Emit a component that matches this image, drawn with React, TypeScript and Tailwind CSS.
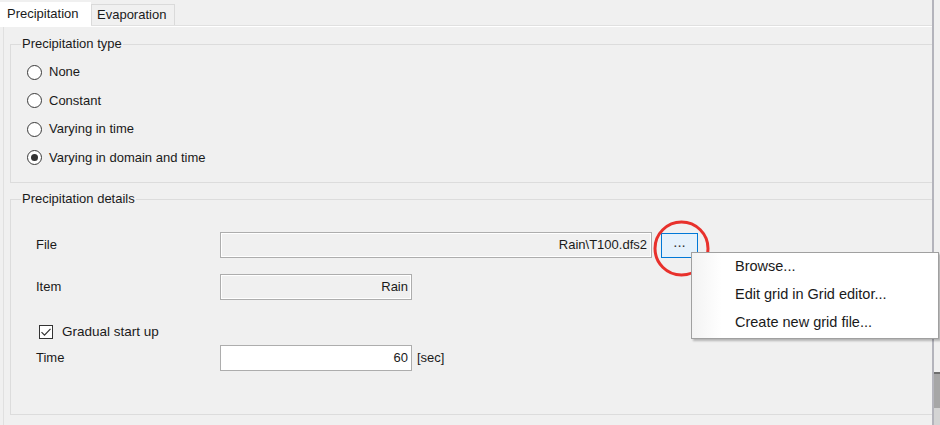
import React from "react";

const font = { fontFamily: '"Liberation Sans", Arial, sans-serif' };

function Radio({ label, checked }: { label: string; checked?: boolean }) {
  return (
    <div className="h-[28.5px] flex items-center">
      <div className="w-[15px] h-[15px] rounded-full border-[1.5px] border-[#3a3a3a] bg-white flex items-center justify-center">
        {checked && <div className="w-[7px] h-[7px] rounded-full bg-[#333333]" />}
      </div>
      <span className="ml-[7px] text-[13px] text-[#1a1a1a] leading-[16px]">{label}</span>
    </div>
  );
}

function GroupBox({
  title,
  className,
  children,
}: {
  title: string;
  className: string;
  children: React.ReactNode;
}) {
  return (
    <div className={"relative border border-[#dcdcdc] mr-[-20px] shrink-0 " + className}>
      <span className="absolute left-[10px] top-[-9px] px-[1px] bg-[#f0f0f0] text-[13px] leading-[16px] text-[#1a1a1a]">
        {title}
      </span>
      {children}
    </div>
  );
}

export default function App() {
  return (
    <div
      className="w-[940px] h-[425px] bg-[#f0f0f0] flex overflow-hidden relative text-[#1a1a1a]"
      style={font}
    >
      {/* main content */}
      <div className="w-[932px] h-full flex flex-col overflow-hidden shrink-0">
        {/* tab strip */}
        <div className="h-[25px] flex items-end shrink-0 relative z-10">
          <div className="w-[91px] h-[25px] mb-[-2px] bg-white flex items-center pl-[7px] text-[13px] pb-[2px]">
            Precipitation
          </div>
          <div className="w-[84px] h-[21px] border border-b-0 border-[#dadada] flex items-center pl-[5px] text-[13px]">
            Evaporation
          </div>
        </div>
        {/* tab panel */}
        <div className="flex-1 ml-[3px] border-l border-t border-[#e0e0e0] shadow-[inset_0_1px_0_#ffffff] flex flex-col pl-[6px] overflow-hidden">
          <GroupBox title="Precipitation type" className="mt-[18px] h-[139px]">
            <div className="pt-[13px] pl-[16px] flex flex-col">
              <Radio label="None" />
              <Radio label="Constant" />
              <Radio label="Varying in time" />
              <Radio label="Varying in domain and time" checked />
            </div>
          </GroupBox>

          <GroupBox title="Precipitation details" className="mt-[16px] h-[216px]">
            <div className="pl-[25px] flex flex-col text-[13px]">
              {/* File */}
              <div className="mt-[32px] h-[26px] flex items-center">
                <span className="w-[184px]">File</span>
                <div className="w-[432px] h-[26px] border border-[#adadad] shadow-[inset_0_0_0_1px_#ffffff] bg-[#f0f0f0] flex items-center justify-end pr-[4px]">
                  Rain\T100.dfs2
                </div>
                <div className="ml-[9px] w-[37px] h-[25px] border border-[#0078d7] bg-[#e5f1fb] flex items-center justify-center pb-[5px] text-[15px] text-[#333333]">
                  ...
                </div>
              </div>
              {/* Item */}
              <div className="mt-[16px] h-[26px] flex items-center">
                <span className="w-[184px]">Item</span>
                <div className="w-[192px] h-[26px] border border-[#adadad] shadow-[inset_0_0_0_1px_#ffffff] bg-[#f0f0f0] flex items-center justify-end pr-[3px]">
                  Rain
                </div>
              </div>
              {/* Checkbox */}
              <div className="mt-[24px] h-[16px] flex items-center ml-[3px]">
                <div className="w-[14px] h-[14px] border border-[#333333] bg-white flex items-center justify-center">
                  <svg width="12" height="12" viewBox="0 0 12 12">
                    <path d="M1.5 6.2 L4.5 9.2 L10.5 2.8" fill="none" stroke="#333333" strokeWidth="1.2" />
                  </svg>
                </div>
                <span className="ml-[9px] text-[13.5px]">Gradual start up</span>
              </div>
              {/* Time */}
              <div className="mt-[5px] h-[26px] flex items-center">
                <span className="w-[184px]">Time</span>
                <div className="w-[192px] h-[26px] border border-[#adadad] bg-white flex items-center justify-end pr-[3px]">
                  60
                </div>
                <span className="ml-[5px]">[sec]</span>
              </div>
            </div>
          </GroupBox>
        </div>
      </div>

      {/* right splitter / scrollbar strip */}
      <div className="w-[8px] h-full flex shrink-0">
        <div className="w-[2px] h-full bg-[#b4b4bc]" />
        <div className="w-[6px] h-full flex flex-col">
          <div className="h-[372px] bg-[#f0f0f0]" />
          <div className="h-[2px] bg-[#6e6e6e]" />
          <div className="h-[34px] bg-[#a6a6a6]" />
          <div className="flex-1 bg-[#d4d4d4]" />
        </div>
      </div>

      {/* red highlight circle */}
      <svg
        className="absolute left-[652px] top-[219px] z-20"
        width="60"
        height="60"
        viewBox="0 0 60 60"
      >
        <circle cx="29.5" cy="29.5" r="26.5" fill="none" stroke="#e8312c" strokeWidth="3" />
      </svg>

      {/* context menu */}
      <div className="absolute left-[691px] top-[252px] w-[248px] h-[87px] z-30 bg-white border border-[#a0a0a0] shadow-[2px_2px_2px_rgba(0,0,0,0.25)] text-[14.5px] text-[#1a1a1a]">
        <div className="absolute left-0 top-0 bottom-0 w-[30px] bg-gradient-to-r from-[#f3f3f3] to-white" />
        <div className="relative flex flex-col">
          <div className="h-[28px] flex items-center pl-[43px]">Browse...</div>
          <div className="h-[28px] flex items-center pl-[43px]">Edit grid in Grid editor...</div>
          <div className="h-[28px] flex items-center pl-[43px]">Create new grid file...</div>
        </div>
      </div>
    </div>
  );
}
